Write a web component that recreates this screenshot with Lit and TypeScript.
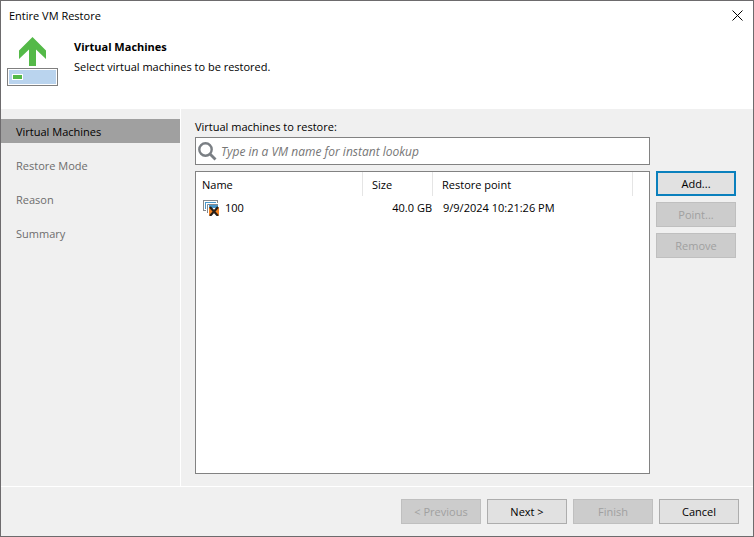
import { LitElement, html, css, svg } from "lit";
import { customElement, state } from "lit/decorators.js";
import { classMap } from "lit/directives/class-map.js";

interface RestoreVm {
  name: string;
  size: string;
  point: string;
}

const restoreIcon = html`<svg class="restore-icon" width="52" height="50" viewBox="0 0 52 50" aria-hidden="true">
  ${svg`
    <path d="M25.500 0 L39 13.500 V22 L29 12.500 V29 H22 V12.500 L12 22 V13.500 Z" fill="#54b948" />
    <rect x="0.500" y="31.500" width="50" height="17" fill="#fff" stroke="#7f7f7f" />
    <rect x="2" y="33" width="47" height="14" fill="#bad4ee" />
    <rect x="5" y="37" width="11" height="6" fill="#fff" />
    <rect x="6" y="38" width="9" height="4" fill="#54b948" />
  `}
</svg>`;

const vmIcon = html`<svg class="vm-icon" width="16" height="16" viewBox="0 0 16 16" aria-hidden="true">
  ${svg`
    <rect x="0.500" y="0.500" width="14" height="10" fill="#fff" stroke="#85898d" />
    <rect x="2" y="2" width="11" height="7" fill="#4a98cb" />
    <rect x="3" y="3" width="13" height="11" fill="#fff" />
    <path d="M4.500 13 V4.500 H15" fill="none" stroke="#85898d" />
    <rect x="6" y="5" width="9" height="3" fill="#4a98cb" />
    <path d="M6 7 L11 11.500 L6 16 Z M16 7 L11 11.500 L16 16 Z" fill="#f58220" />
    <path d="M7 7 L15 16 M15 7 L7 16" stroke="#2a2018" stroke-width="2.200" />
  `}
</svg>`;

@customElement("app-root")
export class AppRoot extends LitElement {
  @state() private step = 0;
  @state() private query = "";

  private steps = ["Virtual Machines", "Restore Mode", "Reason", "Summary"];
  private vms: RestoreVm[] = [{ name: "100", size: "40.0 GB", point: "9/9/2024 10:21:26 PM" }];

  static styles = css`
    :host {
      display: flex;
      flex-direction: column;
      box-sizing: border-box;
      min-height: 100vh;
      border: 1px solid #6d6b6d;
      background: #f0f0f0;
      color: #000;
      font: 11px/16px "Open Sans", "Noto Sans", sans-serif;
    }
    * {
      box-sizing: border-box;
    }
    header {
      background: #fff;
      padding-bottom: 22px;
    }
    .title-bar {
      display: flex;
      align-items: center;
      justify-content: space-between;
      height: 30px;
      padding: 0 8px;
    }
    .close {
      display: flex;
      align-items: center;
      justify-content: center;
      width: 15px;
      height: 16px;
      padding: 0 0 2px;
      border: 0;
      background: none;
    }
    .banner {
      display: flex;
      gap: 15px;
      padding: 6px 6px 0;
    }
    .banner-text {
      padding-top: 2px;
    }
    h1 {
      margin: 0 0 4px;
      font-size: 11px;
      line-height: 16px;
      font-weight: 700;
    }
    p {
      margin: 0;
    }
    .body {
      display: flex;
      flex: 1;
    }
    nav {
      flex: none;
      display: flex;
      flex-direction: column;
      gap: 10px;
      width: 180px;
      padding-top: 10px;
      border-right: 1px solid #fff;
    }
    .step {
      padding: 5px 15px 3px;
      line-height: 16px;
      color: #6d6d6d;
      text-decoration: none;
    }
    .step.current {
      background: #a0a0a0;
      color: #000;
    }
    main {
      flex: 1;
      min-width: 0;
      display: grid;
      grid-template-columns: minmax(0, 1fr) 80px;
      grid-template-rows: auto auto 1fr;
      column-gap: 6px;
      padding: 10px 17px 12px 14px;
    }
    label {
      grid-column: 1;
      padding-bottom: 2px;
    }
    .search {
      grid-column: 1;
      display: flex;
      align-items: center;
      gap: 4px;
      height: 28px;
      margin-bottom: 6px;
      padding: 0 2px;
      border: 1px solid #828282;
      background: #fff;
    }
    .search input {
      flex: 1;
      min-width: 0;
      height: 24px;
      padding: 0;
      border: 0;
      outline: 0;
      background: none;
      font: inherit;
      font-size: 12px;
    }
    .search input::placeholder {
      color: #767676;
      font-style: italic;
      opacity: 1;
    }
    .list {
      grid-column: 1;
      border: 1px solid #828282;
      background: #fff;
    }
    table {
      width: 100%;
      table-layout: fixed;
      border-collapse: separate;
      border-spacing: 0;
    }
    .col-name {
      width: 167px;
    }
    .col-size {
      width: 70px;
    }
    .col-point {
      width: 200px;
    }
    th,
    td {
      height: 24px;
      padding: 0;
      font-weight: 400;
      text-align: left;
      white-space: nowrap;
    }
    th {
      padding: 2px 0 0 9px;
      border-right: 1px solid #e5e5e5;
    }
    th:first-child {
      padding-left: 6px;
    }
    th:last-child {
      border-right: 0;
    }
    td.size {
      padding-right: 1px;
      text-align: right;
    }
    td.point {
      padding-left: 10px;
    }
    .vm {
      display: flex;
      align-items: center;
      gap: 6px;
      padding-left: 7px;
    }
    .actions {
      display: flex;
      flex-direction: column;
      gap: 6px;
    }
    .btn {
      width: 80px;
      height: 25px;
      padding: 0;
      border: 1px solid #adadad;
      background: #e1e1e1;
      color: #000;
      font: inherit;
    }
    .btn.primary {
      border: 2px solid #0a80bd;
    }
    .btn:disabled {
      border-color: #bfbfbf;
      background: #ccc;
      color: #a0a0a0;
    }
    footer {
      display: flex;
      justify-content: flex-end;
      gap: 6px;
      padding: 12px 14px;
      border-top: 1px solid #fff;
    }
  `;

  private matches() {
    const q = this.query.toLowerCase();
    return this.vms.filter((vm) => vm.name.toLowerCase().includes(q));
  }

  render() {
    return html`
      <header>
        <div class="title-bar">
          <span>Entire VM Restore</span>
          <button class="close" aria-label="Close">
            <svg width="11" height="11" viewBox="0 0 11 11" aria-hidden="true">
              <path d="M0.500 0.500 L10.500 10.500 M10.500 0.500 L0.500 10.500" stroke="#000" stroke-width="1" />
            </svg>
          </button>
        </div>
        <div class="banner">
          ${restoreIcon}
          <div class="banner-text">
            <h1>Virtual Machines</h1>
            <p>Select virtual machines to be restored.</p>
          </div>
        </div>
      </header>
      <div class="body">
        <nav>
          ${this.steps.map(
            (name, i) => html`<a
              href="#"
              class=${classMap({ step: true, current: i === this.step })}
              >${name}</a
            >`
          )}
        </nav>
        <main>
          <label for="lookup">Virtual machines to restore:</label>
          <div class="search">
            <svg width="19" height="20" viewBox="0 0 19 20" aria-hidden="true">
              <circle cx="7.500" cy="8.500" r="6.200" fill="none" stroke="#7a7f84" stroke-width="2.400" />
              <path d="M12 13 L17.500 18.500" stroke="#7a7f84" stroke-width="2.800" />
            </svg>
            <input
              id="lookup"
              type="text"
              placeholder="Type in a VM name for instant lookup"
              .value=${this.query}
              @input=${(e: Event) => (this.query = (e.target as HTMLInputElement).value)}
            />
          </div>
          <div class="list">
            <table>
              <colgroup>
                <col class="col-name" />
                <col class="col-size" />
                <col class="col-point" />
                <col />
              </colgroup>
              <thead>
                <tr>
                  <th>Name</th>
                  <th>Size</th>
                  <th>Restore point</th>
                  <th></th>
                </tr>
              </thead>
              <tbody>
                ${this.matches().map(
                  (vm) => html`<tr>
                    <td><div class="vm">${vmIcon}<span>${vm.name}</span></div></td>
                    <td class="size">${vm.size}</td>
                    <td class="point">${vm.point}</td>
                    <td></td>
                  </tr>`
                )}
              </tbody>
            </table>
          </div>
          <div class="actions">
            <button class="btn primary">Add...</button>
            <button class="btn" disabled>Point...</button>
            <button class="btn" disabled>Remove</button>
          </div>
        </main>
      </div>
      <footer>
        <button class="btn" disabled>&lt; Previous</button>
        <button class="btn">Next &gt;</button>
        <button class="btn" disabled>Finish</button>
        <button class="btn">Cancel</button>
      </footer>
    `;
  }
}
